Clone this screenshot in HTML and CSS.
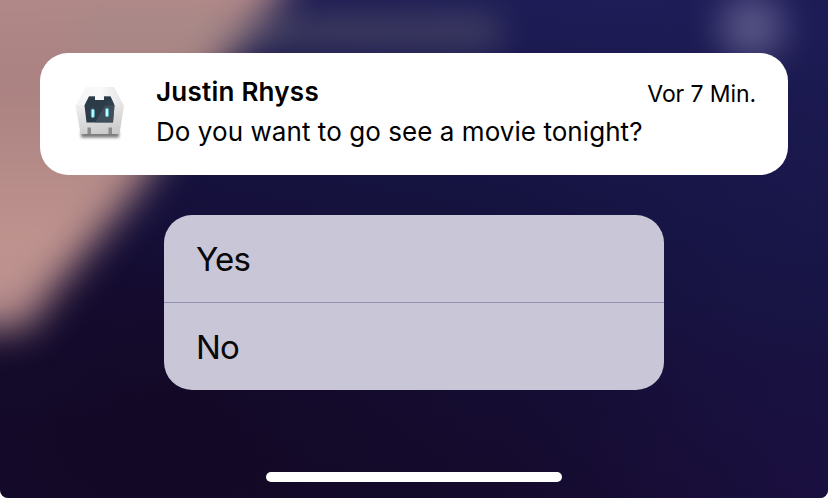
FILE: index.html
```html
<!DOCTYPE html>
<html lang="en">
<head>
<meta charset="utf-8">
<title>Notification</title>
<link rel="stylesheet" href="styles.css">
</head>
<body>
<main class="screen">
  <svg class="wallpaper" viewBox="0 0 828 498" aria-hidden="true">
    <defs>
      <linearGradient id="night" x1=".75" y1="0" x2=".45" y2="1">
        <stop offset="0" stop-color="#1e1d58"/>
        <stop offset=".4" stop-color="#151340"/>
        <stop offset=".72" stop-color="#150d33"/>
        <stop offset="1" stop-color="#140a2a"/>
      </linearGradient>
      <linearGradient id="rose" x1="0" y1="0" x2="0" y2="1">
        <stop offset="0" stop-color="#b98e90"/>
        <stop offset=".4" stop-color="#aa8281"/>
        <stop offset=".8" stop-color="#c0948f"/>
        <stop offset="1" stop-color="#b48b8c"/>
      </linearGradient>
      <radialGradient id="right"><stop offset="0" stop-color="#1a184d" stop-opacity=".7"/><stop offset="1" stop-color="#1a184d" stop-opacity="0"/></radialGradient>
      <radialGradient id="corner"><stop offset="0" stop-color="#1b1042" stop-opacity=".9"/><stop offset="1" stop-color="#1b1042" stop-opacity="0"/></radialGradient>
      <radialGradient id="dark"><stop offset="0" stop-color="#130824" stop-opacity=".8"/><stop offset="1" stop-color="#130824" stop-opacity="0"/></radialGradient>
      <filter id="soft" x="-50%" y="-50%" width="200%" height="200%" color-interpolation-filters="sRGB"><feGaussianBlur stdDeviation="19"/></filter>
      <filter id="smudge" x="-50%" y="-150%" width="200%" height="400%" color-interpolation-filters="sRGB"><feGaussianBlur stdDeviation="17"/></filter>
      <filter id="glow" x="-150%" y="-150%" width="400%" height="400%" color-interpolation-filters="sRGB"><feGaussianBlur stdDeviation="17"/></filter>
    </defs>
    <rect width="828" height="498" fill="url(#night)"/>
    <ellipse cx="828" cy="470" rx="330" ry="220" fill="url(#corner)"/>
    <ellipse cx="810" cy="200" rx="300" ry="280" fill="url(#right)"/>
    <ellipse cx="170" cy="430" rx="300" ry="210" fill="url(#dark)"/>
    <path d="M-80-80H312L278 0 231 50 183 118 137 190 84 253 52 292 28 328-80 331Z" fill="url(#rose)" filter="url(#soft)"/>
    <rect x="75" y="15" width="425" height="34" fill="#93908a" opacity=".32" filter="url(#smudge)"/>
    <circle cx="752" cy="27" r="33" fill="#75709f" opacity=".66" filter="url(#glow)"/>
  </svg>
  <article class="notification">
    <svg class="app-icon" viewBox="0 0 50 56" aria-hidden="true">
      <defs>
        <linearGradient id="shell" x1="0" y1="0" x2="1" y2="0"><stop offset="0" stop-color="#f3f3f3"/><stop offset=".5" stop-color="#fafafa"/><stop offset="1" stop-color="#e2e2e2"/></linearGradient>
        <linearGradient id="front" x1=".3" y1="0" x2=".7" y2="1"><stop offset="0" stop-color="#ececec"/><stop offset="1" stop-color="#c9c9c9"/></linearGradient>
        <filter id="shadow" x="-20%" y="-150%" width="140%" height="400%" color-interpolation-filters="sRGB"><feGaussianBlur stdDeviation="1.5"/></filter>
      </defs>
      <rect x="6" y="45.500" width="38" height="6" fill="#777" filter="url(#shadow)"/>
      <path d="M11 1H39L49 20H.5Z" fill="url(#shell)"/>
      <path d="M.5 19.500H49L44.500 48H5.500Z" fill="url(#front)"/>
      <path d="M14 10.500H20V14H29V10.500H35.500L39.500 19.500 38 36.500H11.500L9.500 19.500Z" fill="#2d3c49"/>
      <path d="M33 14H37L39.500 19.500 38 36.500H20Z" fill="#4b5863" opacity=".65"/>
      <path d="M9.500 19.500 14 10.500H20V14H29V10.500H35.500L39.500 19.500Z" fill="#2b3b48" opacity=".75"/>
      <rect x="16.300" y="23" width="3" height="8.500" rx="1.500" fill="#c8fbfc" stroke="#4fb9c7" stroke-width=".9"/>
      <rect x="30.500" y="22.300" width="3" height="8.500" rx="1.500" fill="#c8fbfc" stroke="#4fb9c7" stroke-width=".9"/>
      <path d="M12.500 41.500H16V48H12.500ZM33.500 41.500H37V48H33.500Z" fill="#8b8b8b"/>
    </svg>
    <div class="content">
      <header class="heading"><h1 class="sender">Justin Rhyss</h1><time class="time">Vor 7 Min.</time></header>
      <p class="message">Do you want to go see a movie tonight?</p>
    </div>
  </article>
  <div class="actions">
    <button class="action">Yes</button>
    <button class="action">No</button>
  </div>
  <div class="home-indicator"></div>
</main>
</body>
</html>
```
FILE: styles.css
```css
* { box-sizing: border-box; }
body { margin: 0; background: #fff; font-family: Inter, sans-serif; color: #000; }
.screen {
  position: relative;
  width: 828px;
  height: 498px;
  padding: 53px 40px 16px;
  display: flex;
  flex-direction: column;
  align-items: center;
  overflow: hidden;
  border-radius: 0 0 8px 8px;
}
.wallpaper { position: absolute; inset: 0; width: 100%; height: 100%; z-index: -1; }
.notification {
  width: 100%;
  height: 122px;
  display: flex;
  padding: 22px 32px 0 35px;
  border-radius: 28px;
  background: #fff;
}
.app-icon { width: 50px; height: 56px; margin-top: 11px; flex: none; }
.content { flex: 1; margin-left: 31px; }
.heading { display: flex; justify-content: space-between; }
.sender { margin: 0; font-size: 26px; line-height: 34px; font-weight: 600; letter-spacing: .24px; }
.time { font-size: 23px; line-height: 38px; letter-spacing: -.1px; }
.message { margin: 0; font-size: 26px; line-height: 36px; letter-spacing: .06px; margin-top: 1px; white-space: nowrap; }
.actions {
  width: 500px;
  height: 175px;
  margin-top: 40px;
  display: flex;
  flex-direction: column;
  border-radius: 28px;
  overflow: hidden;
  background: #c9c6d7;
}
.action {
  flex: 1;
  padding: 0 32px;
  border: 0;
  background: none;
  color: #080808;
  font: 400 33px/40px Inter, sans-serif;
  letter-spacing: -.8px;
  text-align: left;
}
.action + .action { border-top: 1px solid #9490b1; }
.home-indicator { width: 296px; height: 10px; margin-top: auto; border-radius: 5px; background: #fff; }
```
